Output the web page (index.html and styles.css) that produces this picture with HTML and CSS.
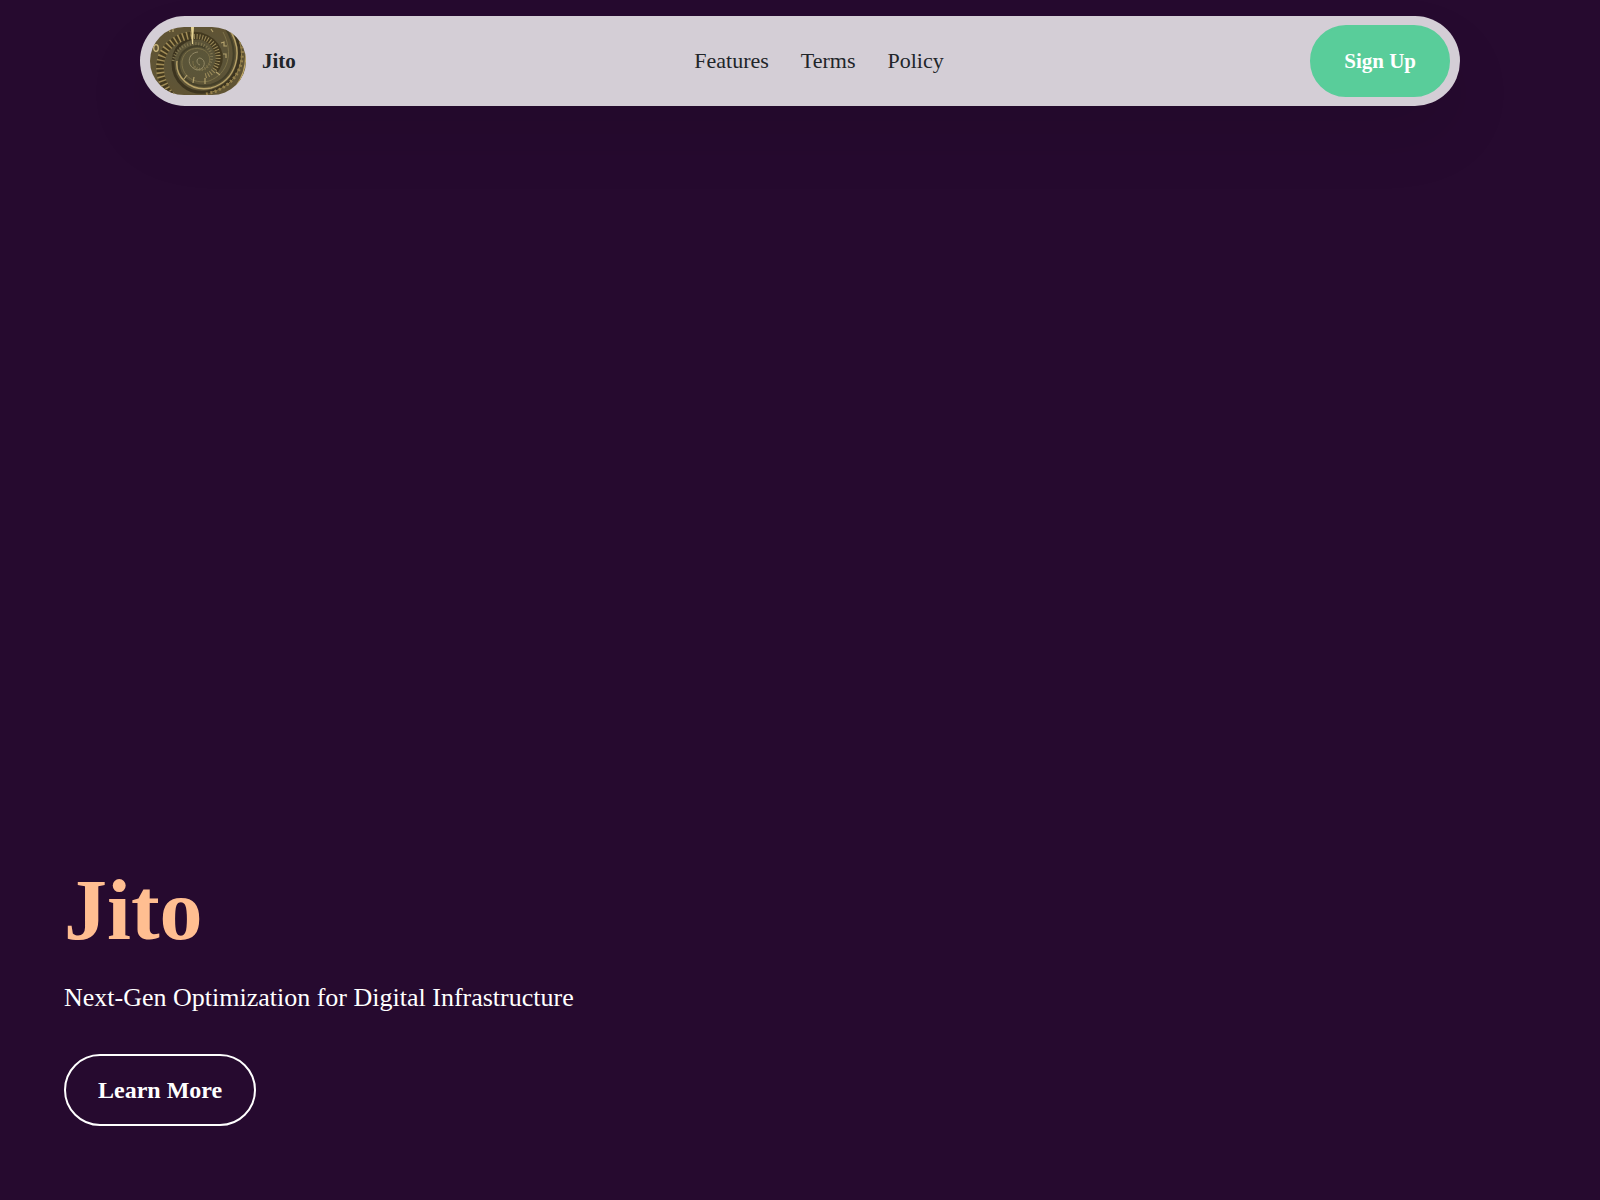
FILE: index.html
```html
<!DOCTYPE html>
<html lang="en">
<head>
    <meta charset="UTF-8">
    <meta name="viewport" content="width=device-width, initial-scale=1.0">
    <title>Jito</title>
    <link rel="stylesheet" href="styles.css">
</head>
<body>
    <header class="navbar">
        <a class="brand" href="#">
            <svg class="brand-logo" viewBox="0 0 96 68" aria-hidden="true">
                <defs>
                    <radialGradient id="brass" cx="50%" cy="50%" r="65%">
                        <stop offset="0" stop-color="#5a5639"/>
                        <stop offset="0.45" stop-color="#5c5438"/>
                        <stop offset="1" stop-color="#635431"/>
                    </radialGradient>
                </defs>
                <rect width="96" height="68" fill="url(#brass)"/>
                <g fill="none">
                    <!-- dark grooves -->
                    <path d="M81 0C98 26 88 56 62 64C38 70 22 54 23 34C25 14 44 6 60 14" stroke="#3c341f" stroke-width="3"/>
                    <path d="M75 0C92 27 82 52 61 58C40 62 27 48 29 34C31 21 46 16 56 21" stroke="#454029" stroke-width="2"/>
                    <!-- teeth -->
                    <path d="M34 80C14 67 6 46 12 29C20 12 36 6 51 9C68 14 74 31 65 43" stroke="#43391f" stroke-width="7"/>
                    <path d="M34 80C14 67 6 46 12 29C18 16 29 10 41 8" stroke="#a18c56" stroke-width="8" stroke-dasharray="1.5 2.7"/>
                    <path d="M41 10C56 7 69 18 68 32C67 42 61 48 54 49" stroke="#9e8d5b" stroke-width="5" stroke-dasharray="1 1.8"/>
                    <path d="M23 34C26 20 39 15 50 17C62 20 64 31 59 38C54 44 46 43 44 39" stroke="#827750" stroke-width="3" stroke-dasharray="1 1.8"/>
                    <path d="M86 2C102 34 86 61 56 67" stroke="#97824d" stroke-width="3" stroke-dasharray="2 2.6"/>
                    <!-- rails -->
                    <path d="M78 0C96 26 85 54 61 61C39 65 25 49 27 34" stroke="#b7a268" stroke-width="1.4"/>
                    <path d="M83 0C101 29 89 58 62 65" stroke="#94804b" stroke-width="1"/>
                    <path d="M73 5C84 26 78 47 59 54C42 58 31 47 32 34C34 24 42 20 51 22C61 25 62 35 56 41C50 46 42 41 43 34" stroke="#7c7149" stroke-width="1"/>
                    <path d="M50 38C46 37 46 31 50 31C57 33 55 43 47 43C36 40 37 26 48 25" stroke="#928865" stroke-width="1"/>
                    <path d="M89 0C99 24 97 44 86 59" stroke="#bfa768" stroke-width="1.2"/>
                    <!-- numerals -->
                    <ellipse cx="6" cy="21" rx="2.3" ry="3.3" stroke="#c9b57b" stroke-width="1.3"/>
                    <path d="M16 4L19 2L20 5M23 5V0M61 2L63 5M71 16L74 15L74 19L77 19M73 27H76V31M66 45L70 48M55 51V57M44 50L43 56M37 48L34 52" stroke="#b3a16c" stroke-width="1.2"/>
                </g>
                <path d="M41 0H44L43 17H42Z" fill="#e6d393"/>
            </svg>
            <span class="brand-name">Jito</span>
        </a>
        <nav class="nav-links">
            <a href="#features">Features</a>
            <a href="#terms">Terms</a>
            <a href="#policy">Policy</a>
        </nav>
        <button class="btn btn-signup" type="button">Sign Up</button>
    </header>

    <main class="hero">
        <h1>Jito</h1>
        <p>Next-Gen Optimization for Digital Infrastructure</p>
        <button class="btn btn-outline" type="button">Learn More</button>
    </main>
</body>
</html>
```
FILE: styles.css
```css
* { box-sizing: border-box; }

body {
    margin: 0;
    min-height: 100vh;
    display: flex;
    flex-direction: column;
    padding: 16px 64px 74px;
    background: #260a2f;
    color: #fff;
    font-family: "Liberation Serif", serif;
}

.navbar {
    display: flex;
    align-items: center;
    justify-content: space-between;
    margin: 0 76px;
    padding: 9px 10px;
    border-radius: 45px;
    background: #d4ced6;
    box-shadow: 0 32px 64px rgba(0, 0, 0, 0.08);
}

.brand { display: flex; align-items: center; gap: 16px; color: #212529; text-decoration: none; }
.brand-logo { width: 96px; height: 68px; border-radius: 34px; }
.brand-name { font-size: 21px; font-weight: bold; }

.nav-links { display: flex; gap: 32px; padding-left: 32px; }
.nav-links a { color: #212529; font-size: 22px; text-decoration: none; }

.btn { height: 72px; padding: 0 32px; border: 2px solid; border-radius: 36px; color: #fff; font-family: inherit; font-weight: bold; cursor: pointer; }
.btn-signup { border-color: #59cd9a; background: #59cd9a; font-size: 21px; }
.btn-outline { border-color: #fff; background: transparent; font-size: 24px; }

.hero { margin-top: auto; }
.hero h1 { margin: 0 0 24px; color: #ffbe91; font-size: 86px; line-height: 96px; }
.hero p { margin: 0 0 40px; font-size: 26px; line-height: 32px; }
```
